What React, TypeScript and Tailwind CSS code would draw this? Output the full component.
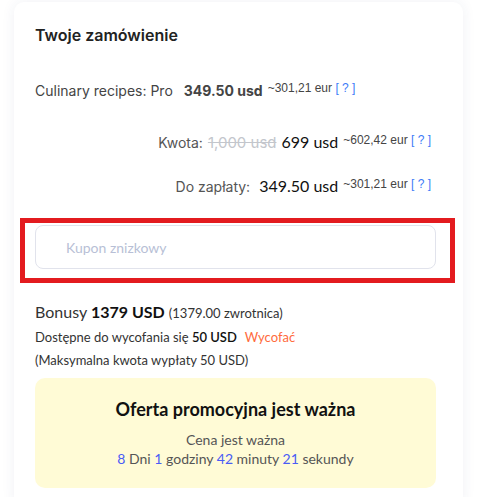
import React from 'react';

const Eur = ({ value }: { value: string }) => (
    <sup className="ml-[5px] text-[12px] text-[#444] font-['Liberation_Sans',Arial,sans-serif] relative -top-[4px]">
        ~{value} eur <span className="text-[#3d7bf7]">[ ? ]</span>
    </sup>
);

export default function App() {
    return (
        <div className="min-h-screen bg-white pl-[14px] pt-[2px] font-['Inter',sans-serif]">
            <div className="w-[449px] bg-white rounded-[10px] shadow-[0_0_14px_rgba(40,60,110,0.07)] pl-[21px] pr-[27px] pt-[21px] pb-[20px]">
                <h2 className="text-[16px] font-semibold text-[#222] leading-[24px]">Twoje zamówienie</h2>

                {/* Product line */}
                <div className="mt-[33px] flex items-baseline text-[#444] leading-[22px]">
                    <span className="text-[14px]">Culinary recipes: Pro</span>
                    <span className="ml-[11px] text-[14px] font-bold">349.50 usd</span>
                    <Eur value="301,21" />
                </div>

                {/* Totals */}
                <div className="mt-[29px] flex flex-col items-end pr-[5px] gap-[21px]">
                    <div className="flex items-baseline leading-[22px]">
                        <span className="text-[14px] text-[#555]">Kwota:</span>
                        <span className="ml-[5px] text-[15px] text-[#c3c6cc] line-through">1,000 usd</span>
                        <span className="ml-[5px] text-[16px] text-[#111] font-['Lato',sans-serif]">699 usd</span>
                        <Eur value="602,42" />
                    </div>
                    <div className="flex items-baseline leading-[22px]">
                        <span className="text-[14px] text-[#555]">Do zapłaty:</span>
                        <span className="ml-[9px] text-[16px] text-[#111] font-['Lato',sans-serif]">349.50 usd</span>
                        <Eur value="301,21" />
                    </div>
                </div>

                {/* Coupon */}
                <div className="relative mt-[27px]">
                    <input
                        placeholder="Kupon znizkowy"
                        className="w-full h-[44px] rounded-[8px] border border-[#e1e3ec] pl-[30px] text-[14px] font-['Lato',sans-serif] placeholder:text-[#b8bfd6] outline-none"
                    />
                    <div className="absolute -left-[15px] -right-[19px] -top-[7px] -bottom-[14px] border-[5px] border-[#e31b1f] pointer-events-none" />
                </div>

                {/* Bonus */}
                <div className="mt-[32px] font-['Lato',sans-serif] text-[#333]">
                    <div className="text-[16px] leading-[22px]">
                        Bonusy <span className="font-bold text-[#111]">1379 USD</span>{' '}
                        <span className="text-[13px]">(1379.00 zwrotnica)</span>
                    </div>
                    <div className="mt-[2px] text-[13px] leading-[22px]">
                        Dostępne do wycofania się <span className="font-semibold text-[#111]">50 USD</span>
                        <span className="ml-[8px] text-[#ff6b3d]">Wycofać</span>
                    </div>
                    <div className="mt-px text-[13px] leading-[22px]">(Maksymalna kwota wypłaty 50 USD)</div>
                </div>

                {/* Promo */}
                <div className="mt-[7px] bg-[#fffbd6] rounded-[10px] pt-[18px] pb-[20px] text-center font-['Lato',sans-serif]">
                    <div className="text-[18px] font-bold text-[#111] leading-[26px]">Oferta promocyjna jest ważna</div>
                    <div className="mt-[8px] text-[14px] text-[#555] leading-[19px]">Cena jest ważna</div>
                    <div className="text-[14px] text-[#555] leading-[19px]">
                        <span className="text-[#4a5cf5]">8</span> Dni <span className="text-[#4a5cf5]">1</span> godziny{' '}
                        <span className="text-[#4a5cf5]">42</span> minuty <span className="text-[#4a5cf5]">21</span> sekundy
                    </div>
                </div>
            </div>
        </div>
    );
}
